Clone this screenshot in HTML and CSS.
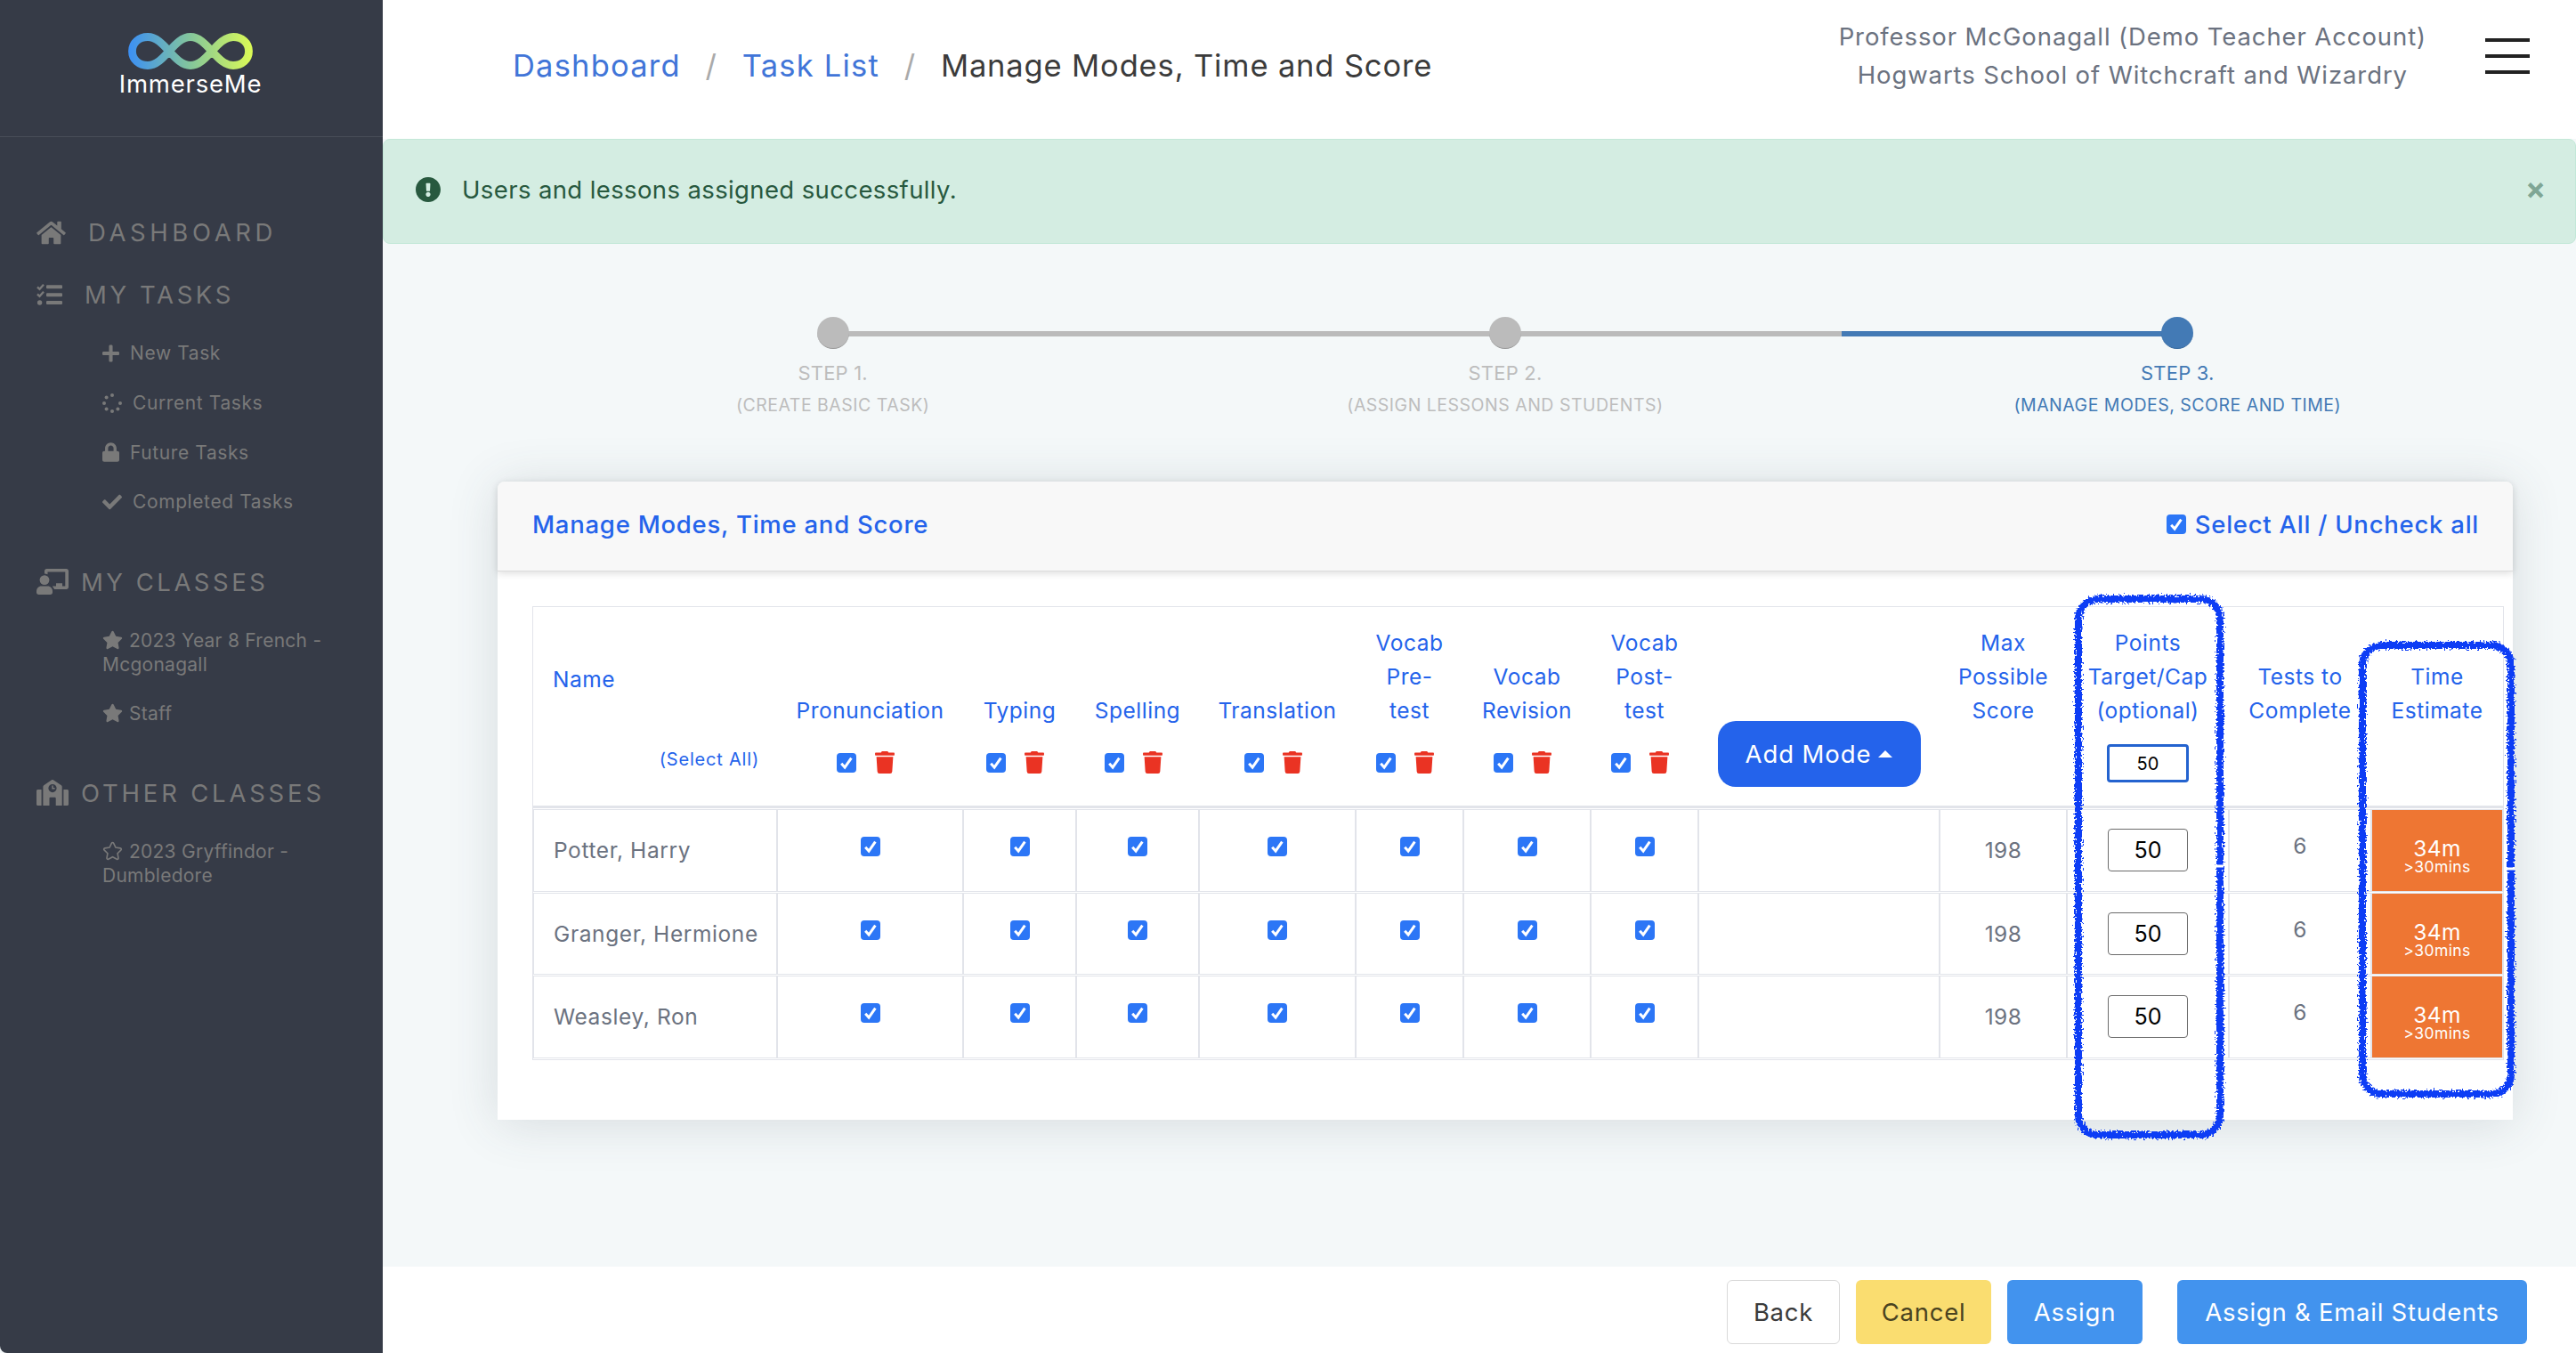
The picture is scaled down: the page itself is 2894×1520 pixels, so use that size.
FILE: index.html
```html
<!DOCTYPE html>
<html lang="en">
<head>
    <meta charset="UTF-8">
    <meta name="viewport" content="width=device-width, initial-scale=1.0">
    <title>Manage Modes, Time and Score</title>
    <link rel="stylesheet" href="styles.css">
</head>
<body>
    <svg width="0" height="0" class="sprite">
        <symbol id="check" viewBox="0 0 512 512"><path d="M173.898 439.404l-166.4-166.4c-9.997-9.997-9.997-26.206 0-36.204l36.203-36.204c9.997-9.998 26.207-9.998 36.204 0L192 312.69 432.095 72.596c9.997-9.997 26.207-9.997 36.204 0l36.203 36.204c9.997 9.997 9.997 26.206 0 36.204l-294.4 294.401c-9.998 9.997-26.207 9.997-36.204-.001z"/></symbol>
        <symbol id="tick" viewBox="0 0 16 16"><path d="M2.200 8.800l3.900 4.200L13.400 2.600" fill="none" stroke="#fff" stroke-width="3"/></symbol>
        <symbol id="star" viewBox="0 0 576 512"><path d="M259.3 17.8L194 150.2 47.9 171.5c-26.2 3.8-36.7 36.1-17.7 54.6l105.7 103-25 145.5c-4.5 26.3 23.2 46 46.4 33.7L288 439.6l130.7 68.7c23.2 12.2 50.9-7.4 46.4-33.7l-25-145.5 105.7-103c19-18.5 8.5-50.8-17.7-54.6L382 150.2 316.7 17.8c-11.7-23.6-45.6-23.9-57.4 0z"/></symbol>
        <symbol id="trash" viewBox="0 0 448 512"><path d="M432 32H312l-9.4-18.7A24 24 0 0 0 281.1 0H166.8a23.72 23.72 0 0 0-21.4 13.3L136 32H16A16 16 0 0 0 0 48v32a16 16 0 0 0 16 16h416a16 16 0 0 0 16-16V48a16 16 0 0 0-16-16zM53.2 467a48 48 0 0 0 47.9 45h245.8a48 48 0 0 0 47.9-45L416 128H32z"/></symbol>
    </svg>

    <aside class="sidebar">
        <div class="brand">
            <svg class="logo" viewBox="0 0 140 41">
                <defs>
                    <linearGradient id="logoFill" gradientUnits="userSpaceOnUse" x1="0" y1="0" x2="140" y2="0">
                        <stop offset="0" stop-color="#3b8ff5"/>
                        <stop offset="0.5" stop-color="#84c69b"/>
                        <stop offset="1" stop-color="#dcfb55"/>
                    </linearGradient>
                </defs>
                <path d="M22 4.500C12 4.500 4.500 11 4.500 20.500S12 36.500 22 36.500C41 36.500 51 4.500 70 4.500S99 36.500 118 36.500C128 36.500 135.500 30 135.500 20.500S128 4.500 118 4.500C99 4.500 89 36.500 70 36.500S41 4.500 22 4.500z" fill="none" stroke="url(#logoFill)" stroke-width="8.800"/>
            </svg>
            <div class="brand-name">ImmerseMe</div>
        </div>
        <nav class="menu">
            <a class="menu-item dashboard">
                <svg class="icon-home" viewBox="0 0 576 512"><path d="M280.37 148.26L96 300.11V464a16 16 0 0 0 16 16l112.06-.29a16 16 0 0 0 15.92-16V368a16 16 0 0 1 16-16h64a16 16 0 0 1 16 16v95.64a16 16 0 0 0 16 16.05L464 480a16 16 0 0 0 16-16V300L295.67 148.26a12.19 12.19 0 0 0-15.3 0zM571.6 251.47L488 182.56V44.05a12 12 0 0 0-12-12h-56a12 12 0 0 0-12 12v72.61L318.47 43a48 48 0 0 0-61 0L4.34 251.47a12 12 0 0 0-1.6 16.9l25.5 31A12 12 0 0 0 45.15 301l235.22-193.74a12.19 12.19 0 0 1 15.3 0L530.9 301a12 12 0 0 0 16.9-1.6l25.5-31a12 12 0 0 0-1.7-16.93z"/></svg>
                <span>DASHBOARD</span>
            </a>
            <a class="menu-item tasks">
                <svg class="icon-tasks" viewBox="0 0 29 26">
                    <path d="M1 4.5l2.5 2.3L8 1.8M1 12.5l2.5 2.3L8 9.8" fill="none" stroke="#797979" stroke-width="2.4"/>
                    <circle cx="3.6" cy="22" r="2.7"/>
                    <rect x="11" y="2.3" width="18" height="4" rx="1"/>
                    <rect x="11" y="11.2" width="18" height="4" rx="1"/>
                    <rect x="11" y="20.1" width="18" height="4" rx="1"/>
                </svg>
                <span>MY TASKS</span>
            </a>
            <ul class="submenu">
                <li><svg class="icon-narrow" viewBox="0 0 448 512"><path d="M416 208H272V64c0-17.67-14.33-32-32-32h-32c-17.67 0-32 14.33-32 32v144H32c-17.67 0-32 14.33-32 32v32c0 17.67 14.33 32 32 32h144v144c0 17.67 14.33 32 32 32h32c17.67 0 32-14.33 32-32V304h144c17.67 0 32-14.33 32-32v-32c0-17.67-14.33-32-32-32z"/></svg><span>New Task</span></li>
                <li><svg class="icon-wide" viewBox="0 0 22 22"><circle cx="11" cy="2" r="2"/><circle cx="4.6" cy="4.6" r="2"/><circle cx="2" cy="11" r="2"/><circle cx="4.6" cy="17.4" r="2"/><circle cx="11" cy="20" r="2"/><circle cx="17.4" cy="17.4" r="2"/><circle cx="20" cy="11" r="2"/></svg><span>Current Tasks</span></li>
                <li><svg class="icon-narrow" viewBox="0 0 448 512"><path d="M400 224h-24v-72C376 68.2 307.8 0 224 0S72 68.2 72 152v72H48c-26.5 0-48 21.5-48 48v192c0 26.5 21.5 48 48 48h352c26.5 0 48-21.5 48-48V272c0-26.5-21.5-48-48-48zm-104 0H152v-72c0-39.7 32.3-72 72-72s72 32.3 72 72v72z"/></svg><span>Future Tasks</span></li>
                <li><svg class="icon-wide"><use href="#check"/></svg><span>Completed Tasks</span></li>
            </ul>
            <a class="menu-item classes">
                <svg class="icon-class" viewBox="0 0 36 29">
                    <circle cx="9" cy="12.6" r="5.4"/>
                    <path d="M5.5 19.6h7c3.3 0 5.500 2.600 5.500 5.600v1.400c0 1.300-1 2.400-2.400 2.400H2.400C1 29 0 27.900 0 26.600v-1.400c0-3 2.200-5.600 5.500-5.600z"/>
                    <path d="M9 5.400V2.400C9 1.100 10.100 0 11.400 0h22.200C34.900 0 36 1.100 36 2.400v18.200c0 1.300-1.100 2.400-2.400 2.400H20c-.4-1-1-1.900-1.900-2.800V19.600H22v-3.300h7v3.300h3.300V3.600H12.500V6.200C11.400 5.600 10.300 5.400 9 5.400z"/>
                </svg>
                <span>MY CLASSES</span>
            </a>
            <ul class="class-list">
                <li><svg class="icon-star"><use href="#star"/></svg>2023 Year 8 French -<br>Mcgonagall</li>
                <li><svg class="icon-star"><use href="#star"/></svg>Staff</li>
            </ul>
            <a class="menu-item others">
                <svg class="icon-class" viewBox="0 0 36 29">
                    <path d="M0 12.500c0-.9.700-1.600 1.600-1.600H5.600V29H1.200C.5 29 0 28.500 0 27.800zM30.400 10.900h4c.9 0 1.600.7 1.600 1.600v15.300c0 .7-.5 1.200-1.200 1.200h-4.400z"/>
                    <path fill-rule="evenodd" d="M7.400 29V7.800c0-.6.300-1.100.8-1.500L17 .3c.6-.4 1.300-.4 1.900 0l9 6c.5.400.8.900.8 1.500V29h-7V20.700c0-.5-.4-.9-.9-.9h-5.400c-.5 0-.9.400-.9.900V29zM18 5a4.600 4.600 0 1 0 0 9.200A4.600 4.600 0 0 0 18 5z"/>
                    <path d="M17.300 6.600h1.500v2.500h1.800v1.500h-3.300z"/>
                </svg>
                <span>OTHER CLASSES</span>
            </a>
            <ul class="class-list">
                <li><svg class="icon-star outline" viewBox="0 0 576 512"><path transform="translate(23 20) scale(.92)" d="M259.300 17.800L194 150.200 47.900 171.500c-26.200 3.800-36.700 36.100-17.700 54.600l105.700 103-25 145.500c-4.500 26.300 23.200 46 46.400 33.700L288 439.600l130.700 68.700c23.200 12.200 50.900-7.400 46.400-33.700l-25-145.500 105.700-103c19-18.500 8.500-50.800-17.700-54.600L382 150.200 316.700 17.800c-11.700-23.600-45.600-23.900-57.400 0z"/></svg>2023 Gryffindor -<br>Dumbledore</li>
            </ul>
        </nav>
    </aside>

    <main class="content">
        <header class="topbar">
            <div class="breadcrumb">
                <a>Dashboard</a><i>/</i><a>Task List</a><i>/</i><span>Manage Modes, Time and Score</span>
            </div>
            <div class="account">
                <div class="account-name">Professor McGonagall (Demo Teacher Account)</div>
                <div class="account-school">Hogwarts School of Witchcraft and Wizardry</div>
            </div>
            <div class="hamburger"><b></b><b></b><b></b></div>
        </header>

        <div class="alert">
            <svg class="icon-alert" viewBox="8 8 496 496"><path d="M504 256c0 136.997-111.043 248-248 248S8 392.997 8 256C8 119.083 119.043 8 256 8s248 111.083 248 248zm-248 50c-25.405 0-46 20.595-46 46s20.595 46 46 46 46-20.595 46-46-20.595-46-46-46zm-43.673-165.346l7.418 136c.347 6.364 5.609 11.346 11.982 11.346h48.546c6.373 0 11.635-4.982 11.982-11.346l7.418-136c.375-6.874-5.098-12.654-11.982-12.654h-63.383c-6.884 0-12.356 5.780-11.981 12.654z"/></svg>
            <span class="alert-text">Users and lessons assigned successfully.</span>
            <span class="close">&times;</span>
        </div>

        <div class="steps">
            <div class="step first">
                <div class="track"><div class="dot"></div></div>
                <div class="step-title">STEP 1.</div>
                <div class="step-note">(CREATE BASIC TASK)</div>
            </div>
            <div class="step">
                <div class="track"><div class="dot"></div></div>
                <div class="step-title">STEP 2.</div>
                <div class="step-note">(ASSIGN LESSONS AND STUDENTS)</div>
            </div>
            <div class="step active">
                <div class="track"><div class="dot"></div></div>
                <div class="step-title">STEP 3.</div>
                <div class="step-note">(MANAGE MODES, SCORE AND TIME)</div>
            </div>
        </div>

        <section class="card">
            <div class="card-header">
                <span class="card-title">Manage Modes, Time and Score</span>
                <label class="check-all"><span class="box"><svg><use href="#tick"/></svg></span><span>Select All / Uncheck all</span></label>
            </div>
            <table class="modes">
                <colgroup>
                    <col class="c-name"><col class="c-pron"><col class="c-typing"><col class="c-spell"><col class="c-trans">
                    <col class="c-vocab"><col class="c-rev"><col class="c-vocab"><col class="c-add"><col class="c-max">
                    <col class="c-points"><col class="c-tests"><col class="c-time">
                </colgroup>
                <thead>
                    <tr>
                        <th class="name"><div>Name</div><small>(Select All)</small></th>
                        <th>Pronunciation<div class="tools"><span class="box"><svg><use href="#tick"/></svg></span><svg class="trash"><use href="#trash"/></svg></div></th>
                        <th>Typing<div class="tools"><span class="box"><svg><use href="#tick"/></svg></span><svg class="trash"><use href="#trash"/></svg></div></th>
                        <th>Spelling<div class="tools"><span class="box"><svg><use href="#tick"/></svg></span><svg class="trash"><use href="#trash"/></svg></div></th>
                        <th>Translation<div class="tools"><span class="box"><svg><use href="#tick"/></svg></span><svg class="trash"><use href="#trash"/></svg></div></th>
                        <th>Vocab<br>Pre-<br>test<div class="tools"><span class="box"><svg><use href="#tick"/></svg></span><svg class="trash"><use href="#trash"/></svg></div></th>
                        <th>Vocab<br>Revision<div class="tools"><span class="box"><svg><use href="#tick"/></svg></span><svg class="trash"><use href="#trash"/></svg></div></th>
                        <th>Vocab<br>Post-<br>test<div class="tools"><span class="box"><svg><use href="#tick"/></svg></span><svg class="trash"><use href="#trash"/></svg></div></th>
                        <th class="add"><button class="add-mode">Add Mode <em></em></button></th>
                        <th>Max<br>Possible<br>Score<div class="tools"></div></th>
                        <th>Points<br>Target/Cap<br>(optional)<div class="tools"><input class="points focused" value="50"></div></th>
                        <th>Tests to<br>Complete<div class="tools"></div></th>
                        <th>Time<br>Estimate<div class="tools"></div></th>
                    </tr>
                </thead>
                <tbody id="students"></tbody>
            </table>

            <!-- hand drawn highlights -->
            <svg class="marker" width="540" height="640" viewBox="0 0 540 640">
                <filter id="rough" x="-5%" y="-5%" width="110%" height="110%">
                    <feTurbulence type="fractalNoise" baseFrequency="0.5" numOctaves="3" seed="4"/>
                    <feDisplacementMap in="SourceGraphic" scale="10" xChannelSelector="R" yChannelSelector="G"/>
                </filter>
                <g filter="url(#rough)">
                    <rect x="25" y="15" width="159" height="602" rx="22"/>
                    <rect x="344" y="67" width="167" height="504" rx="22"/>
                </g>
                <path d="M178 315h10M505 318h10"/>
            </svg>
        </section>

        <footer class="actions">
            <button class="btn back">Back</button>
            <button class="btn cancel">Cancel</button>
            <button class="btn assign">Assign</button>
            <button class="btn email">Assign &amp; Email Students</button>
        </footer>
    </main>

    <script>
        var students = ["Potter, Harry", "Granger, Hermione", "Weasley, Ron"];
        var check = '<td><span class="box"><svg><use href="#tick"/></svg></span></td>';
        var rows = "";
        students.forEach(function(name) {
            rows += '<tr><td class="name">' + name + '</td>';
            for (var i = 0; i < 7; i++) {
                rows += check;
            }
            rows += '<td></td><td class="num">198</td>';
            rows += '<td class="num"><input class="points" value="50"></td>';
            rows += '<td class="tests">6</td>';
            rows += '<td class="time"><div>34m</div><small>&gt;30mins</small></td></tr>';
        });
        document.getElementById("students").innerHTML = rows;
    </script>
</body>
</html>
```
FILE: styles.css
```css
* {
    box-sizing: border-box;
}
body {
    margin: 0;
    width: 2894px;
    height: 1520px;
    overflow: hidden;
    display: flex;
    background: #f4f8f9;
    font-family: Inter, sans-serif;
    font-size: 24.5px;
    color: #6b7280;
}
.sprite {
    position: absolute;
}
svg {
    display: block;
    fill: currentColor;
    flex: none;
}

/* Sidebar */
.sidebar {
    width: 430px;
    height: 1520px;
    flex: none;
    background: #363b47;
    color: #797979;
    border-bottom-left-radius: 8px;
}
.brand {
    height: 154px;
    border-bottom: 1px solid #484d58;
    padding: 37px 2px 0 0;
    display: flex;
    flex-direction: column;
    align-items: center;
}
.logo {
    width: 140px;
    height: 41px;
}
.brand-name {
    margin-top: -2px;
    color: #fff;
    font-size: 27.5px;
    line-height: 36px;
    letter-spacing: 0.8px;
}
.menu {
    padding: 86px 0 0 41px;
}
.menu-item {
    display: flex;
    align-items: center;
    height: 42px;
    font-size: 27.5px;
    letter-spacing: 3.6px;
}
.dashboard {
    letter-spacing: 4.6px;
}
.icon-home {
    width: 33px;
    height: 29px;
    margin-right: 25px;
}
.icon-tasks {
    width: 29px;
    height: 26px;
    margin-right: 25px;
}
.icon-class {
    width: 36px;
    height: 29px;
    margin-right: 14px;
}
.tasks {
    margin-top: 28px;
}
.submenu,
.class-list {
    list-style: none;
    margin: 0;
    padding: 17px 0 0 74px;
    font-size: 21px;
    letter-spacing: 0.6px;
}
.submenu li {
    display: flex;
    align-items: center;
    height: 55.7px;
}
.icon-narrow {
    width: 19px;
    height: 22px;
    margin-right: 12px;
}
.icon-wide {
    width: 22px;
    height: 22px;
    margin-right: 12px;
}
.classes {
    margin-top: 41px;
    letter-spacing: 3.5px;
}
.class-list {
    padding-top: 31px;
    line-height: 27px;
    letter-spacing: 0.25px;
}
.class-list li {
    margin-bottom: 28px;
}
.icon-star {
    display: inline-block;
    width: 23px;
    height: 22px;
    margin-right: 7px;
    vertical-align: -3px;
}
.outline {
    fill: none;
    stroke: currentColor;
    stroke-width: 44;
}
.others {
    margin-top: 55px;
    letter-spacing: 3.8px;
}

/* Top bar */
.content {
    width: 2464px;
    height: 1520px;
    display: flex;
    flex-direction: column;
}
.topbar {
    height: 156px;
    flex: none;
    background: #fff;
    display: flex;
    align-items: flex-start;
    padding: 20px 52px 0 146px;
}
.breadcrumb {
    display: flex;
    flex: 1;
    font-size: 34.5px;
    line-height: 40px;
    padding-top: 34px;
    letter-spacing: 0.85px;
    color: #3b3b3b;
}
.breadcrumb a {
    color: #4175d8;
    letter-spacing: 1.2px;
}
.breadcrumb i {
    font-style: normal;
    color: #aaa;
    width: 69px;
    text-align: center;
}
.account {
    text-align: center;
    font-size: 27.5px;
    line-height: 43px;
    letter-spacing: 0.9px;
    margin-right: 66px;
}
.hamburger {
    padding-top: 23px;
}
.hamburger b {
    display: block;
    width: 50px;
    height: 4px;
    background: #222;
    margin-bottom: 14px;
}

/* Alert */
.alert {
    height: 118px;
    flex: none;
    display: flex;
    align-items: center;
    padding: 0 33px 4px 36px;
    background: #d4ede2;
    border: 1px solid #c3e8d8;
    border-radius: 8px;
    color: #28593f;
    font-size: 27.5px;
    letter-spacing: 0.38px;
}
.icon-alert {
    width: 28px;
    height: 28px;
    margin-right: 24px;
}
.alert-text {
    flex: 1;
}
.close {
    font-size: 34px;
    font-weight: 700;
    letter-spacing: 0;
    padding-bottom: 4px;
    color: #7fa695;
}

/* Steps */
.steps {
    display: flex;
    width: 2266px;
    margin: 82px 0 0 128px;
    height: 126px;
    flex: none;
    text-align: center;
    color: #bdbdbd;
}
.step {
    flex: 1;
}
.track {
    height: 36px;
    display: flex;
    justify-content: center;
    background: linear-gradient(#bbb, #bbb) 0 16px / 100% 6px no-repeat;
}
.first .track {
    background-position: 378px 16px;
}
.active .track {
    background: linear-gradient(#437ab5, #437ab5) 0 16px / 50% 6px no-repeat;
}
.dot {
    width: 36px;
    height: 36px;
    border-radius: 50%;
    background: #bbb;
    border-bottom: 1px solid #999;
}
.active .dot {
    background: #437ab5;
    border-color: #33679d;
}
.active {
    color: #437ab5;
}
.step-title {
    margin-top: 10px;
    font-size: 22px;
    line-height: 34px;
    letter-spacing: 0.2px;
}
.step-note {
    font-size: 19.5px;
    line-height: 38px;
    letter-spacing: 0.5px;
}

/* Card */
.card {
    position: relative;
    width: 2264px;
    height: 717px;
    flex: none;
    margin: 59px 0 0 129px;
    background: #fff;
    border-radius: 8px 8px 0 0;
    box-shadow: 0 4px 56px rgba(60, 75, 85, 0.16);
}
.card-header {
    height: 101px;
    display: flex;
    justify-content: space-between;
    align-items: center;
    padding: 0 38px 5px 39px;
    margin-bottom: 39px;
    background: #f8f8f8;
    border-bottom: 1px solid #dcdcdc;
    border-radius: 8px 8px 0 0;
    box-shadow: 0 2px 8px rgba(0, 0, 0, 0.14);
    color: #2463eb;
    font-size: 27.5px;
    font-weight: 500;
    letter-spacing: 0.75px;
}
.check-all {
    display: flex;
    align-items: center;
    gap: 10px;
}
.box {
    display: inline-flex;
    width: 22px;
    height: 22px;
    align-items: center;
    justify-content: center;
    background: #2c76f6;
    border-radius: 4px;
    flex: none;
}
.box svg {
    width: 16px;
    height: 16px;
}
.modes {
    width: 2213px;
    margin-left: 39px;
    table-layout: fixed;
    border-collapse: separate;
    border-spacing: 0 1px;
    border: 1px solid #e2e4ea;
}
.c-name { width: 274px; }
.c-pron { width: 209px; }
.c-typing { width: 127px; }
.c-spell { width: 138px; }
.c-trans { width: 176px; }
.c-vocab { width: 121px; }
.c-rev { width: 143px; }
.c-add { width: 271px; }
.c-max { width: 143px; }
.c-points { width: 182px; }
.c-tests { width: 160px; }
.c-time { width: 148px; }
.modes th {
    height: 225px;
    padding: 0;
    border-bottom: 3px solid #e2e4ea;
    vertical-align: bottom;
    color: #2463eb;
    font-weight: 400;
    line-height: 38px;
    letter-spacing: 0.5px;
}
.tools {
    height: 88px;
    padding: 29px 10px 0 0;
    display: flex;
    align-items: flex-start;
    justify-content: center;
    gap: 21px;
}
.trash {
    width: 22px;
    height: 25px;
    margin-top: -2px;
    color: #ea3323;
}
.modes th.name {
    text-align: left;
    padding: 0 20px 33px 22px;
}
.name small {
    display: block;
    margin-top: 52px;
    font-size: 20px;
    text-align: right;
    letter-spacing: 0.8px;
}
.modes th.add {
    padding-bottom: 21px;
}
.add-mode {
    width: 228px;
    height: 74px;
    display: flex;
    align-items: center;
    justify-content: center;
    gap: 8px;
    margin: 0 auto;
    border: 0;
    border-radius: 20px;
    background: #2463eb;
    color: #fff;
    font: inherit;
    font-size: 27.5px;
    letter-spacing: 0.9px;
}
.add-mode em {
    border: 8px solid transparent;
    border-top: 0;
    border-bottom-color: #fff;
}
.modes td {
    height: 92.5px;
    padding: 25px 0 0 0;
    border: 1px solid #e2e4ea;
    text-align: center;
    vertical-align: top;
    line-height: 30px;
    letter-spacing: 0.4px;
}
.modes td.name {
    text-align: left;
    padding: 0 0 0 22px;
    vertical-align: middle;
    letter-spacing: 0.6px;
}
.modes td.num {
    vertical-align: middle;
    padding-top: 0;
}
.modes td.time {
    padding-top: 28px;
    background: #ee7633;
    background-clip: padding-box;
    color: #fff;
}
.time div {
    height: 26px;
}
.time small {
    display: block;
    font-size: 17.5px;
    line-height: 20px;
}
.points {
    width: 90px;
    height: 48px;
    padding: 0;
    border: 1px solid #6b6b6b;
    border-radius: 4px;
    background: #fff;
    color: #000;
    text-align: center;
    font-family: inherit;
    font-size: 25px;
}
.points.focused {
    width: 92px;
    height: 43px;
    border: 3px solid #2463cf;
    font-size: 20px;
    margin: -10px -10px 0 0;
}
.marker {
    position: absolute;
    left: 1751px;
    top: 117px;
    fill: none;
    stroke: #0a3cf5;
    stroke-width: 8;
}
.marker path {
    stroke: #fff;
    stroke-width: 3;
}

/* Footer */
.actions {
    margin-top: auto;
    height: 97px;
    flex: none;
    display: flex;
    justify-content: flex-end;
    align-items: flex-start;
    gap: 18px;
    padding: 15px 55px 0 0;
    background: #fff;
}
.btn {
    height: 72px;
    border: 0;
    border-radius: 6px;
    padding: 0;
    font-family: inherit;
    font-size: 27.5px;
    letter-spacing: 0.75px;
    color: #fff;
    background: #4293ee;
}
.back {
    width: 127px;
    background: #fff;
    border: 1px solid #d9d9d9;
    color: #3b3b3b;
}
.cancel {
    width: 152px;
    background: #fadd70;
    color: #4a4320;
}
.assign {
    width: 152px;
}
.email {
    width: 393px;
    margin-left: 21px;
}
```
